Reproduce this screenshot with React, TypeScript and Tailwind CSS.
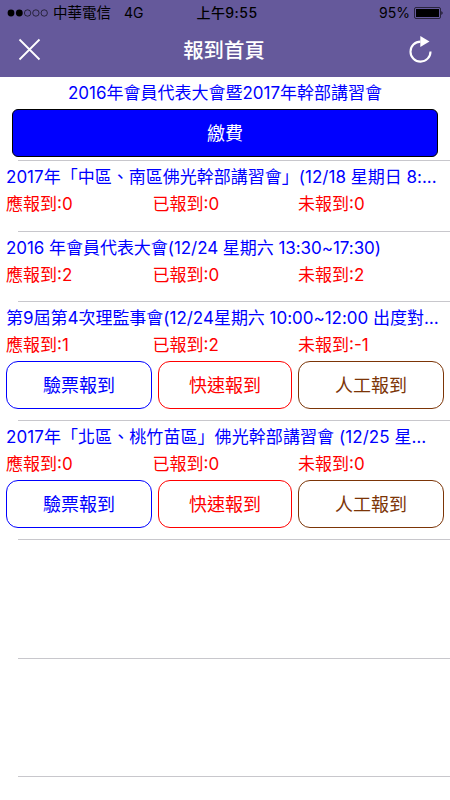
import type { ReactNode } from "react"

type Session = {
  title: string
  spacing: string
  expected: number
  arrived: number
  missing: number
  actions: boolean
}

const sessions: Session[] = [
  {
    title: "2017年「中區、南區佛光幹部講習會」(12/18 星期日 8:...",
    spacing: "tracking-[0.01px]",
    expected: 0,
    arrived: 0,
    missing: 0,
    actions: false,
  },
  {
    title: "2016 年會員代表大會(12/24 星期六 13:30~17:30)",
    spacing: "tracking-[-0.05px]",
    expected: 2,
    arrived: 0,
    missing: 2,
    actions: false,
  },
  {
    title: "第9屆第4次理監事會(12/24星期六 10:00~12:00 出度對…",
    spacing: "tracking-[-0.02px]",
    expected: 1,
    arrived: 2,
    missing: -1,
    actions: true,
  },
  {
    title: "2017年「北區、桃竹苗區」佛光幹部講習會 (12/25 星…",
    spacing: "tracking-[0.07px]",
    expected: 0,
    arrived: 0,
    missing: 0,
    actions: true,
  },
]

export default function App() {
  return (
    <main className="h-[800px] w-[450px] overflow-hidden bg-white font-['Inter','Noto_Sans_CJK_TC',sans-serif]">
      <header className="h-[77px] bg-[#65599b]">
        <StatusBar />
        <NavBar />
      </header>

      <section className="h-[83px] px-3">
        <h2 className="h-8 text-center text-[17px] leading-8 whitespace-nowrap text-[#0000ff]">
          2016年會員代表大會暨2017年幹部講習會
        </h2>
        <button className="block h-12 w-full rounded-md border border-black bg-[#0000ff] pt-0.5 text-lg leading-none text-white">
          繳費
        </button>
      </section>
      <Divider />

      {sessions.map((session) => (
        <SessionRow key={session.title} session={session} />
      ))}

      <div className="h-[118px]" />
      <Divider />
      <div className="h-[117px]" />
      <Divider />
    </main>
  )
}

function StatusBar() {
  return (
    <div className="grid h-[25px] grid-cols-3 items-center px-[7px] text-[13.5px] leading-6 text-black">
      <div className="flex items-center whitespace-nowrap">
        <svg width="42" height="10" viewBox="0 0 42 10" className="mr-1">
          <circle cx="4" cy="5" r="3.4" />
          <circle cx="12.3" cy="5" r="3.4" />
          <circle cx="20.6" cy="5" r="3.2" fill="none" stroke="black" strokeWidth="0.6" />
          <circle cx="28.9" cy="5" r="3.2" fill="none" stroke="black" strokeWidth="0.6" />
          <circle cx="37.2" cy="5" r="3.2" fill="none" stroke="black" strokeWidth="0.6" />
        </svg>
        <span className="text-[14.5px]">中華電信</span>
        <span className="ml-[13px] text-[14px]">4G</span>
      </div>
      <div className="pl-1 text-center text-[14px] font-medium tracking-[0.45px]">上午9:55</div>
      <div className="flex items-center justify-end">
        <span className="mr-1 text-[14px]">95%</span>
        <svg width="29" height="12" viewBox="0 0 29 12">
          <rect x="0.5" y="0.5" width="26" height="11" rx="1.5" fill="none" stroke="black" strokeWidth="0.6" />
          <rect x="2" y="2" width="23" height="8" />
          <path d="M27.5 4 Q29.5 6 27.5 8 Z" />
        </svg>
      </div>
    </div>
  )
}

function NavBar() {
  return (
    <nav className="flex h-12 items-center justify-between px-[18px] text-white">
      <svg width="23" height="23" viewBox="0 0 23 23" fill="none" stroke="currentColor" strokeWidth="1.8">
        <path d="M1.5 1.5 21.5 21.5M21.5 1.5 1.5 21.5" />
      </svg>
      <h1 className="pt-1 pr-0.5 text-[20.4px] font-medium">報到首頁</h1>
      <svg width="23" height="27" viewBox="0 0 23 27" fill="none">
        <path d="M11.5 5.6A10 10 0 1 0 21.5 15.5" stroke="currentColor" strokeWidth="2.1" />
        <path d="M11.3 0 20.5 5.6 11.3 11Z" fill="currentColor" />
      </svg>
    </nav>
  )
}

function SessionRow({ session }: { session: Session }) {
  return (
    <>
      <article className={session.actions ? "h-[118px] px-1.5" : "h-[69.7px] px-1.5"}>
        <h3 className={`h-8 text-[17px] leading-8 whitespace-nowrap text-[#0000ff] ${session.spacing}`}>
          {session.title}
        </h3>
        <div className="grid h-[26px] grid-cols-[146.5px_145.5px_1fr] text-[17px] leading-[22px] text-[#ff0000]">
          <span>應報到:{session.expected}</span>
          <span>已報到:{session.arrived}</span>
          <span>未報到:{session.missing}</span>
        </div>
        {session.actions && (
          <div className="mt-[0.5px] grid grid-cols-[146px_134px_146px] gap-1.5">
            <ActionButton color="border-[#0000ff] text-[#0000ff]">驗票報到</ActionButton>
            <ActionButton color="border-[#ff0000] text-[#ff0000]">快速報到</ActionButton>
            <ActionButton color="border-[#7c3507] text-[#7c3507]">人工報到</ActionButton>
          </div>
        )}
      </article>
      <Divider />
    </>
  )
}

function ActionButton({ color, children }: { color: string; children: ReactNode }) {
  return (
    <button className={`h-12 rounded-xl border pt-[3px] text-lg leading-none ${color}`}>{children}</button>
  )
}

function Divider() {
  return <div className="ml-[18px] h-px bg-[#c8c7cc]" />
}
